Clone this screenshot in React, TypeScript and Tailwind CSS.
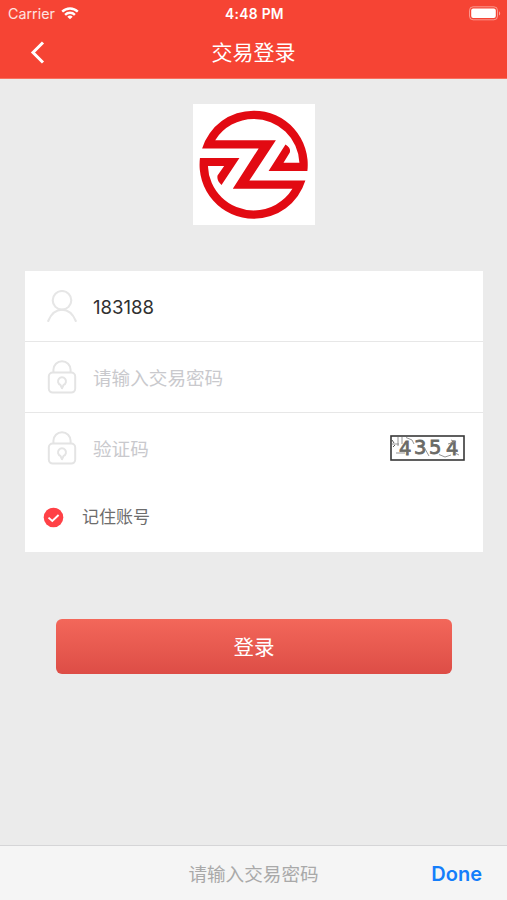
import React from 'react';

interface FieldRowProps {
    icon: React.ReactNode;
    children: React.ReactNode;
    last?: boolean;
}

function WifiIcon() {
    return (
        <svg width="18" height="13" viewBox="0 0 18 13" fill="none" stroke="#fff" strokeWidth="2.4">
            <path d="M1.2 4.7a11.2 11.2 0 0 1 15.6 0" />
            <path d="M4.1 7.8a7 7 0 0 1 9.8 0" />
            <path d="M9 12.3 6.3 9.7a3.9 3.9 0 0 1 5.4 0Z" fill="#fff" stroke="none" />
        </svg>
    );
}

function BatteryIcon() {
    return (
        <svg width="32" height="15" viewBox="0 0 32 15" fill="none">
            <rect x="0.5" y="0.8" width="28" height="13" rx="3.6" stroke="#fff" strokeOpacity="0.45" />
            <rect x="2.2" y="2.6" width="24.6" height="9.4" rx="2" fill="#fff" />
            <path d="M30 5.2c1.6.8 1.6 3.6 0 4.4Z" fill="#fff" fillOpacity="0.5" />
        </svg>
    );
}

function Logo() {
    return (
        <svg className="block h-full w-full" viewBox="38 26 368 365">
            <path
                fill="#e20a12"
                d="M65.5 160A163 163 0 0 1 221 46A163 163 0 0 1 383 228H266L317 148Q334 158 330 172L311 203H359A138 138 0 0 0 221 71A138 138 0 0 0 105 135H288L208 257H377A163 163 0 0 1 221 372A163 163 0 0 1 59 189H178L124 270Q109 258 112 242L132 213H83A138 138 0 0 0 221 347A138 138 0 0 0 338 282H158L236 160Z"
            />
        </svg>
    );
}

function UserIcon() {
    return (
        <svg width="30" height="33" viewBox="0 0 30 33" fill="none" stroke="#e6e6e6" strokeWidth="2.1" strokeLinecap="round">
            <circle cx="15" cy="10.3" r="9.3" />
            <path d="M1.2 31C4 24 9 19.7 15 19.7S26 24 28.8 31" />
        </svg>
    );
}

function LockIcon() {
    return (
        <svg width="30" height="34" viewBox="0 0 30 34" fill="none" stroke="#e4e4e4" strokeWidth="2">
            <rect x="1.8" y="12.6" width="26.4" height="20" rx="4" />
            <path d="M6.4 12.4V9.8a8.6 8.6 0 0 1 17.2 0V12.4" />
            <path d="M13.4 24.9a4 4 0 1 1 3.2 0L15 28.2Z" strokeLinejoin="round" />
        </svg>
    );
}

function Captcha() {
    return (
        <svg width="75" height="26" viewBox="0 0 75 26">
            <rect x="1" y="1" width="73" height="24" fill="#fff" stroke="#383838" strokeWidth="1.6" />
            <g fill="#6a6a66" stroke="#6a6a66" strokeWidth="0.8" fontFamily="'DejaVu Sans', sans-serif" fontSize="19.5">
                <text x="9" y="20">4</text>
                <text x="24" y="19">3</text>
                <text x="39" y="19">5</text>
                <text x="56" y="19.5">4</text>
            </g>
            <g fill="none" stroke="#888" strokeWidth="0.9">
                <path d="M8 2V11M2 9H9M12 2V9M6 18H15M16 2.5 22 5 24 9" />
                <path d="M34 12 39 21M49 19.5 55 22 61 20M58 9 64 7M61 5 66 7M65 18 69 20" />
                <path d="M2 5 4 8M3 12 5 10" stroke="#444" />
            </g>
        </svg>
    );
}

function FieldRow({ icon, children, last }: FieldRowProps) {
    return (
        <div className={`flex items-center pr-[18px] pl-[22px] ${last ? 'h-[70px]' : 'h-[71px] border-b border-[#e7e7e7]'}`}>
            <div className="flex w-[46px] shrink-0">{icon}</div>
            {children}
        </div>
    );
}

const inputClass = 'min-w-0 flex-1 bg-transparent pt-[3px] text-[18.6px] text-[#303030] outline-none placeholder:text-[#c9c9cd]';

export default function App() {
    return (
        <div className="flex h-[900px] w-[507px] flex-col bg-[#ebebeb] font-['Inter','Noto_Sans_CJK_SC',sans-serif]">
            <header className="h-[79px] border-b border-[#f8705f] bg-[#f64434] text-white">
                <div className="grid h-[27px] grid-cols-3 items-center pr-[6px] pl-2">
                    <div className="flex items-center gap-[6px] text-[14.3px] text-white/85">
                        <span>Carrier</span>
                        <WifiIcon />
                    </div>
                    <span className="pt-px text-center text-[13.8px] font-semibold tracking-[0.3px]">4:48 PM</span>
                    <div className="flex justify-end">
                        <BatteryIcon />
                    </div>
                </div>
                <div className="grid h-[51px] grid-cols-3 items-center">
                    <svg className="ml-[30px]" width="15" height="24" viewBox="0 0 15 24" fill="none" stroke="#fff" strokeWidth="3">
                        <path d="M13 1.5 3 11.5 13 21.5" />
                    </svg>
                    <h1 className="pt-px text-center text-[21px] font-normal">交易登录</h1>
                </div>
            </header>

            <main className="flex flex-1 flex-col">
                <div className="mt-[25px] ml-[193px] h-[121px] w-[122px] bg-white">
                    <Logo />
                </div>

                <form className="mt-[46px] mr-[24px] ml-[25px] h-[281px] bg-white">
                    <FieldRow icon={<UserIcon />}>
                        <input className={inputClass} defaultValue="183188" />
                    </FieldRow>
                    <FieldRow icon={<LockIcon />}>
                        <input className={inputClass} type="password" placeholder="请输入交易密码" />
                    </FieldRow>
                    <FieldRow icon={<LockIcon />} last>
                        <input className={inputClass} placeholder="验证码" />
                        <Captcha />
                    </FieldRow>
                    <div className="flex h-[68px] items-center gap-[18px] pl-[18px]">
                        <svg width="21" height="21" viewBox="0 0 21 21" fill="none">
                            <circle cx="10.5" cy="10.5" r="9.8" fill="#ff4146" />
                            <path d="M5.5 10.6 9.3 14 15.6 8" stroke="#fff" strokeWidth="1.9" />
                        </svg>
                        <span className="pt-[2px] text-[17px] text-[#6d6d6d]">记住账号</span>
                    </div>
                </form>

                <button className="mt-[67px] mr-[55px] ml-[56px] h-[55px] rounded-[6px] bg-linear-to-b from-[#f3675a] to-[#dd4d46] pt-[3px] text-[20.5px] text-white">
                    登录
                </button>
            </main>

            <footer className="grid h-[55px] grid-cols-[1fr_auto_1fr] items-center border-t border-[#d5d5d7] bg-[#f5f5f5] pr-[25px] pl-[25px]">
                <span />
                <span className="pt-[3px] text-[18.6px] text-[#a9a9a9]">请输入交易密码</span>
                <button className="justify-self-end pt-px text-[20px] font-semibold text-[#147efb]">Done</button>
            </footer>
        </div>
    );
}
